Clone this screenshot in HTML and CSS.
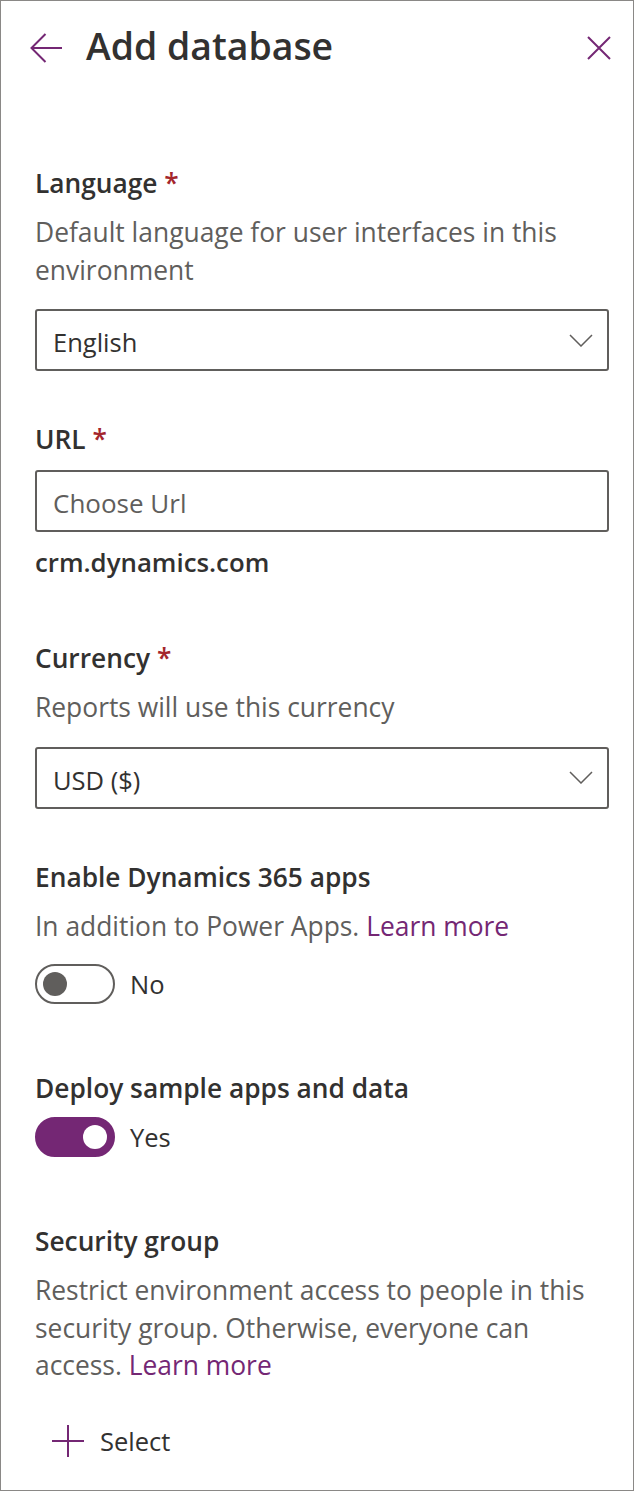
FILE: index.html
```html
<!DOCTYPE html>
<html lang="en">
<head>
<meta charset="utf-8">
<title>Add database</title>
<link rel="stylesheet" href="styles.css">
</head>
<body>
<div class="panel">
  <header class="panel-header">
    <svg class="icon-back" width="33" height="30" viewBox="0 0 33 30" aria-hidden="true">
      <path d="M1.5 15 H32 M15.5 1 L1.5 15 L15.5 29" fill="none" stroke="#742774" stroke-width="2"/>
    </svg>
    <h1 class="panel-title">Add database</h1>
    <svg class="icon-close" width="24" height="24" viewBox="0 0 24 24" aria-hidden="true">
      <path d="M1 1 L23 23 M23 1 L1 23" fill="none" stroke="#742774" stroke-width="2"/>
    </svg>
  </header>

  <main class="form">
    <section class="field">
      <div class="label">Language <span class="req">*</span></div>
      <p class="desc">Default language for user interfaces in this environment</p>
      <div class="select gap-after-desc">
        <span class="select-text">English</span>
        <svg class="chevron" width="24" height="13" viewBox="0 0 24 13" aria-hidden="true">
          <path d="M1 1 L12 12 L23 1" fill="none" stroke="#605e5c" stroke-width="1.5"/>
        </svg>
      </div>
    </section>

    <section class="field">
      <div class="label">URL <span class="req">*</span></div>
      <input class="textbox" type="text" placeholder="Choose Url">
      <div class="suffix">crm.dynamics.com</div>
    </section>

    <section class="field">
      <div class="label">Currency <span class="req">*</span></div>
      <p class="desc">Reports will use this currency</p>
      <div class="select gap-after-desc">
        <span class="select-text">USD ($)</span>
        <svg class="chevron" width="24" height="13" viewBox="0 0 24 13" aria-hidden="true">
          <path d="M1 1 L12 12 L23 1" fill="none" stroke="#605e5c" stroke-width="1.5"/>
        </svg>
      </div>
    </section>

    <section class="field">
      <div class="label">Enable Dynamics 365 apps</div>
      <p class="desc">In addition to Power Apps. <a class="link" href="#">Learn more</a></p>
      <div class="toggle-row toggle-after-desc">
        <span class="toggle"><span class="knob"></span></span>
        <span class="toggle-text">No</span>
      </div>
    </section>

    <section class="field">
      <div class="label">Deploy sample apps and data</div>
      <div class="toggle-row toggle-after-label">
        <span class="toggle on"><span class="knob"></span></span>
        <span class="toggle-text">Yes</span>
      </div>
    </section>

    <section class="field">
      <div class="label">Security group</div>
      <p class="desc">Restrict environment access to people in this security group. Otherwise, everyone can access. <a class="link" href="#">Learn more</a></p>
      <div class="action">
        <svg class="icon-plus" width="32" height="32" viewBox="0 0 32 32" aria-hidden="true">
          <path d="M16 0 V32 M0 16 H32" fill="none" stroke="#742774" stroke-width="2"/>
        </svg>
        <span class="action-text">Select</span>
      </div>
    </section>
  </main>
</div>
</body>
</html>
```

FILE: styles.css
```css
* {
  box-sizing: border-box;
}

html, body {
  margin: 0;
  padding: 0;
  background: #ffffff;
}

body {
  font-family: "Open Sans", "Noto Sans", "Liberation Sans", sans-serif;
  color: #323130;
}

.panel {
  width: 634px;
  height: 1491px;
  border: 1px solid #8a8886;
  background: #ffffff;
  overflow: hidden;
}

.panel-header {
  display: flex;
  align-items: flex-start;
  padding: 21px 22px 0 29px;
  height: 68px;
}

.icon-back {
  flex: none;
  margin-top: 11px;
  margin-right: 23px;
}

.panel-title {
  flex: 1;
  margin: 0;
  font-size: 37.4px;
  line-height: 48px;
  font-weight: 600;
  color: #323130;
}

.icon-close {
  flex: none;
  margin-top: 14px;
}

.form {
  display: flex;
  flex-direction: column;
  gap: 50px;
  padding: 96px 24px 0 34px;
}

.field {
  display: flex;
  flex-direction: column;
}

.label {
  font-size: 26.3px;
  line-height: 36px;
  font-weight: 600;
  color: #323130;
}

.req {
  color: #a4262c;
}

.desc {
  margin: 13px 0 0;
  max-width: 560px;
  font-size: 26.4px;
  line-height: 37.5px;
  color: #605e5c;
}

.link {
  color: #742774;
  text-decoration: none;
}

.select {
  display: flex;
  align-items: center;
  justify-content: space-between;
  height: 62px;
  border: 2px solid #605e5c;
  border-radius: 3px;
  padding: 4px 14px 0 16px;
}

.gap-after-desc {
  margin-top: 20px;
}

.select-text {
  font-size: 25.5px;
  line-height: 54px;
  color: #323130;
}

.chevron {
  margin-top: -4px;
}

.textbox {
  display: block;
  width: 100%;
  height: 62px;
  margin-top: 13px;
  border: 2px solid #605e5c;
  border-radius: 3px;
  padding: 4px 16px 0;
  font-family: inherit;
  font-size: 26px;
  line-height: 54px;
  color: #323130;
  background: #ffffff;
  outline: none;
}

.textbox::placeholder {
  color: #605e5c;
  opacity: 1;
}

.suffix {
  margin-top: 12px;
  margin-bottom: 10px;
  font-size: 25.8px;
  line-height: 36px;
  font-weight: 600;
  color: #323130;
}

.toggle-row {
  display: flex;
  align-items: center;
  gap: 15px;
}

.toggle-after-desc {
  margin-top: 19px;
  margin-bottom: 16px;
}

.toggle-after-label {
  margin-top: 11px;
  margin-bottom: 16px;
}

.toggle {
  display: flex;
  align-items: center;
  width: 80px;
  height: 40px;
  border: 2px solid #605e5c;
  border-radius: 20px;
  padding: 0 6px;
  background: #ffffff;
}

.toggle .knob {
  width: 24px;
  height: 24px;
  border-radius: 50%;
  background: #605e5c;
}

.toggle.on {
  background: #742774;
  border-color: #742774;
  justify-content: flex-end;
}

.toggle.on .knob {
  background: #ffffff;
}

.toggle-text {
  font-size: 25.5px;
  line-height: 40px;
  color: #323130;
}

.action {
  display: flex;
  align-items: center;
  gap: 16px;
  margin-top: 36px;
  padding-left: 17px;
  height: 40px;
}

.action-text {
  font-size: 25.5px;
  line-height: 40px;
  color: #323130;
}
```
